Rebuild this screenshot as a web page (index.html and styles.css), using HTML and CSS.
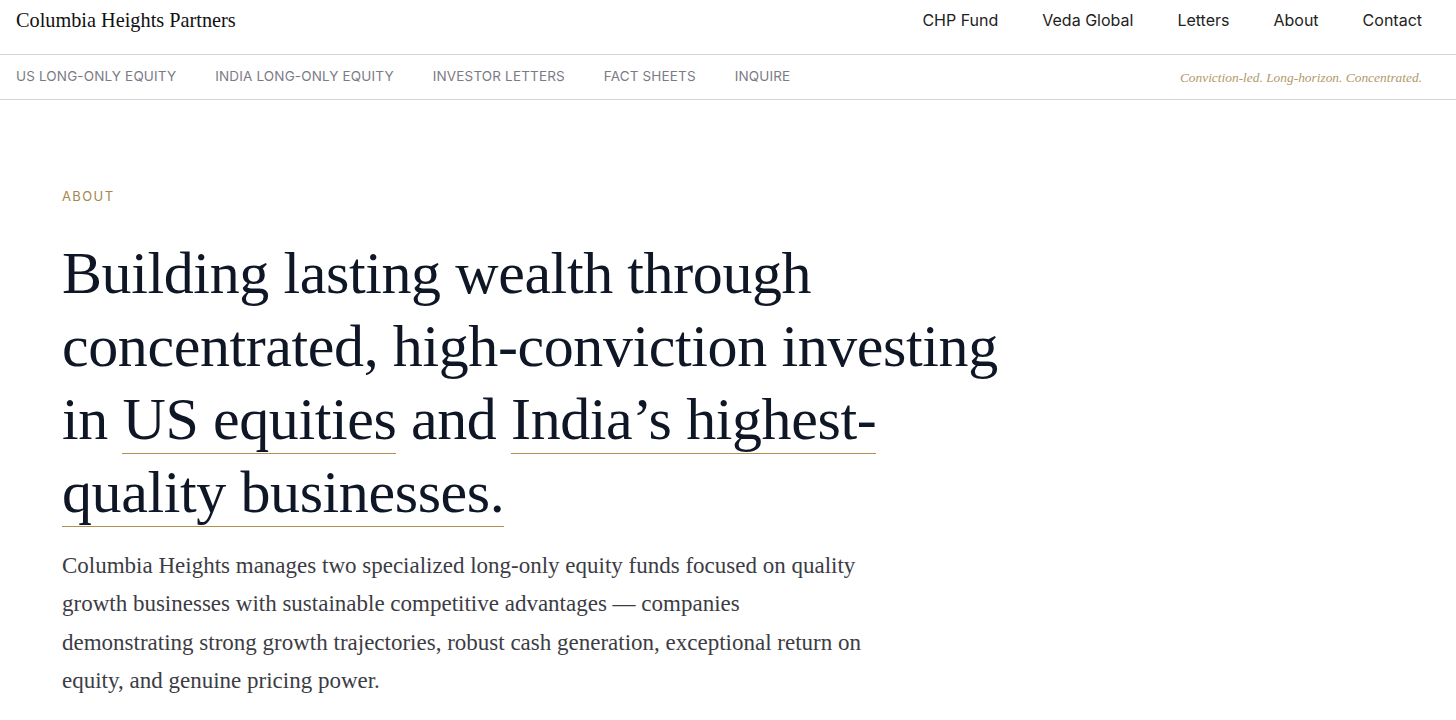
FILE: index.html
```html
<!DOCTYPE html>
<html lang="en">
<head>
<meta charset="utf-8">
<title>Columbia Heights Partners — About</title>
<link rel="stylesheet" href="styles.css">
</head>
<body>
<header class="topbar">
  <a class="brand" href="#">Columbia Heights Partners</a>
  <nav class="main-nav">
    <a href="#">CHP Fund</a>
    <a href="#">Veda Global</a>
    <a href="#">Letters</a>
    <a href="#">About</a>
    <a href="#">Contact</a>
  </nav>
</header>
<div class="subbar">
  <nav class="sub-nav">
    <a href="#">US Long-Only Equity</a>
    <a href="#">India Long-Only Equity</a>
    <a href="#">Investor Letters</a>
    <a href="#">Fact Sheets</a>
    <a href="#">Inquire</a>
  </nav>
  <p class="tagline">Conviction-led. Long-horizon. Concentrated.</p>
</div>
<main class="hero">
  <p class="eyebrow">About</p>
  <h1 class="headline">Building lasting wealth through<br>concentrated, high-conviction investing<br>in <a class="link" href="#">US equities</a> and <a class="link" href="#">India’s highest-</a><br><a class="link" href="#">quality businesses.</a></h1>
  <p class="lede">Columbia Heights manages two specialized long-only equity funds focused on quality<br>growth businesses with sustainable competitive advantages — companies<br>demonstrating strong growth trajectories, robust cash generation, exceptional return on<br>equity, and genuine pricing power.</p>
</main>
</body>
</html>
```
FILE: styles.css
```css
* { box-sizing: border-box; }
html, body { margin: 0; padding: 0; background: #fff; }
body { font-family: "Liberation Serif", "Times New Roman", serif; color: #111827; }
a { color: inherit; text-decoration: none; }
p { margin: 0; }

.topbar {
  height: 55px;
  display: flex;
  align-items: center;
  justify-content: space-between;
  padding: 0 34px 0 16px;
  border-bottom: 1px solid #d4d4d4;
}
.brand {
  font-family: "Liberation Serif", serif;
  font-size: 20.3px;
  color: #111;
  padding-bottom: 13px;
}
.main-nav {
  display: flex;
  gap: 44px;
  font-family: "Inter", "Liberation Sans", sans-serif;
  font-size: 16px;
  color: #222;
  padding-bottom: 14px;
}

.subbar {
  height: 45px;
  display: flex;
  align-items: center;
  justify-content: space-between;
  padding: 0 34px 0 16px;
  border-bottom: 1px solid #d4d4d4;
}
.sub-nav {
  display: flex;
  gap: 39px;
  font-family: "Inter", "Liberation Sans", sans-serif;
  font-size: 13.5px;
  letter-spacing: 0.15px;
  text-transform: uppercase;
  color: #7b7b85;
  padding-bottom: 2px;
}
.tagline {
  font-family: "Liberation Serif", serif;
  font-style: italic;
  font-size: 13.4px;
  color: #b09a6a;
  padding-top: 2px;
}

.hero {
  padding: 88px 62px 0;
}
.eyebrow {
  font-family: "Inter", "Liberation Sans", sans-serif;
  font-size: 13px;
  letter-spacing: 1.4px;
  text-transform: uppercase;
  color: #a5884e;
}
.headline {
  margin: 33px 0 0;
  font-family: "Liberation Serif", serif;
  font-weight: 400;
  font-size: 60px;
  line-height: 73px;
  color: #0f1726;
  letter-spacing: -0.4px;
}
.link {
  padding-bottom: 2px;
  background-image: linear-gradient(#b0914f, #b0914f);
  background-repeat: no-repeat;
  background-position: 0 100%;
  background-size: 100% 1px;
}
.lede {
  margin-top: 18px;
  font-family: "Liberation Serif", serif;
  font-size: 23px;
  line-height: 38.3px;
  color: #3c3c44;
}
```
